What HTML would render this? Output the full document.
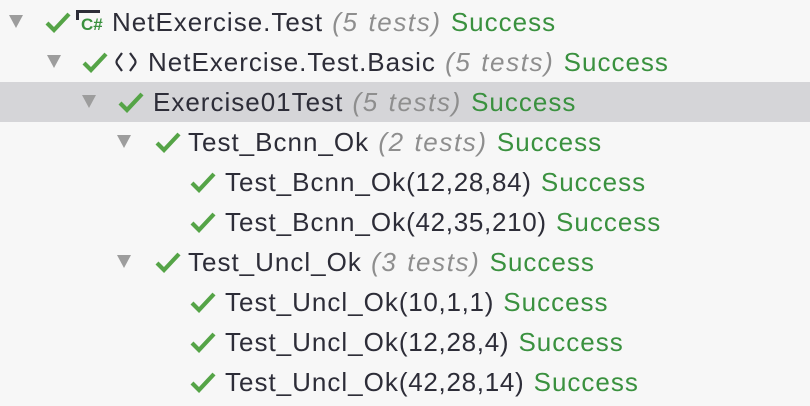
<!DOCTYPE html>
<html><head><style>
body{margin:0;width:810px;height:406px;background:#f7f7f7;overflow:hidden;font-family:"Liberation Sans",sans-serif;}
.sel{position:absolute;left:0;top:82px;width:810px;height:40px;background:#d5d5d8;}
.r{position:absolute;height:40px;line-height:40px;font-size:26px;letter-spacing:1px;word-spacing:1px;color:#2d2d38;white-space:nowrap;}
.g{color:#8e8e8e;font-style:italic;letter-spacing:1.6px;}
.s{color:#3a913f;}
.n{letter-spacing:0.7px;}
.tri{position:absolute;width:0;height:0;border-left:7px solid transparent;border-right:7px solid transparent;border-top:13px solid #9d9d9d;}
.ck{position:absolute;width:26px;height:22px;}
</style></head><body>
<div class="sel"></div>
<svg width="0" height="0" style="position:absolute"><defs><symbol id="c" viewBox="0 0 26 22"><path d="M2 12 L9 19 L24 3" fill="none" stroke="#55a447" stroke-width="4.2"/></symbol></defs></svg>

<div class="tri" style="left:9px;top:15px"></div>
<svg class="ck" style="left:45px;top:11px"><use href="#c"/></svg>
<div style="position:absolute;left:76px;top:10px;width:24px;height:3px;background:#2d2d38"></div>
<div style="position:absolute;left:76px;top:10px;width:3px;height:10px;background:#2d2d38"></div>
<div style="position:absolute;left:81px;top:15px;font:bold 17px 'Liberation Sans',sans-serif;color:#3a913f">C#</div>
<div class="r" style="left:112px;top:2px">NetExercise.Test <span class="g">(5 tests)</span> <span class="s">Success</span></div>

<div class="tri" style="left:47px;top:55px"></div>
<svg class="ck" style="left:82px;top:51px"><use href="#c"/></svg>
<svg style="position:absolute;left:114px;top:51px" width="24" height="22"><path d="M8 2 L3 9 Q2 11 3 13 L8 20 M16 2 L21 9 Q22 11 21 13 L16 20" fill="none" stroke="#2d2d38" stroke-width="2.2"/></svg>
<div class="r" style="left:148px;top:42px">NetExercise.Test.Basic <span class="g">(5 tests)</span> <span class="s">Success</span></div>

<div class="tri" style="left:82px;top:95px"></div>
<svg class="ck" style="left:118px;top:91px"><use href="#c"/></svg>
<div class="r" style="left:153px;top:82px">Exercise01Test <span class="g">(5 tests)</span> <span class="s">Success</span></div>

<div class="tri" style="left:117px;top:135px"></div>
<svg class="ck" style="left:155px;top:131px"><use href="#c"/></svg>
<div class="r" style="left:188px;top:122px">Test_Bcnn_Ok <span class="g">(2 tests)</span> <span class="s">Success</span></div>

<svg class="ck" style="left:190px;top:171px"><use href="#c"/></svg>
<div class="r" style="left:225px;top:162px">Test_Bcnn_Ok<span class="n">(12,28,84)</span> <span class="s">Success</span></div>
<svg class="ck" style="left:190px;top:211px"><use href="#c"/></svg>
<div class="r" style="left:225px;top:202px">Test_Bcnn_Ok<span class="n">(42,35,210)</span> <span class="s">Success</span></div>

<div class="tri" style="left:117px;top:255px"></div>
<svg class="ck" style="left:155px;top:251px"><use href="#c"/></svg>
<div class="r" style="left:188px;top:242px">Test_Uncl_Ok <span class="g">(3 tests)</span> <span class="s">Success</span></div>

<svg class="ck" style="left:190px;top:291px"><use href="#c"/></svg>
<div class="r" style="left:225px;top:282px">Test_Uncl_Ok<span class="n">(10,1,1)</span> <span class="s">Success</span></div>
<svg class="ck" style="left:190px;top:331px"><use href="#c"/></svg>
<div class="r" style="left:225px;top:322px">Test_Uncl_Ok<span class="n">(12,28,4)</span> <span class="s">Success</span></div>
<svg class="ck" style="left:190px;top:371px"><use href="#c"/></svg>
<div class="r" style="left:225px;top:362px">Test_Uncl_Ok<span class="n">(42,28,14)</span> <span class="s">Success</span></div>
</body></html>
